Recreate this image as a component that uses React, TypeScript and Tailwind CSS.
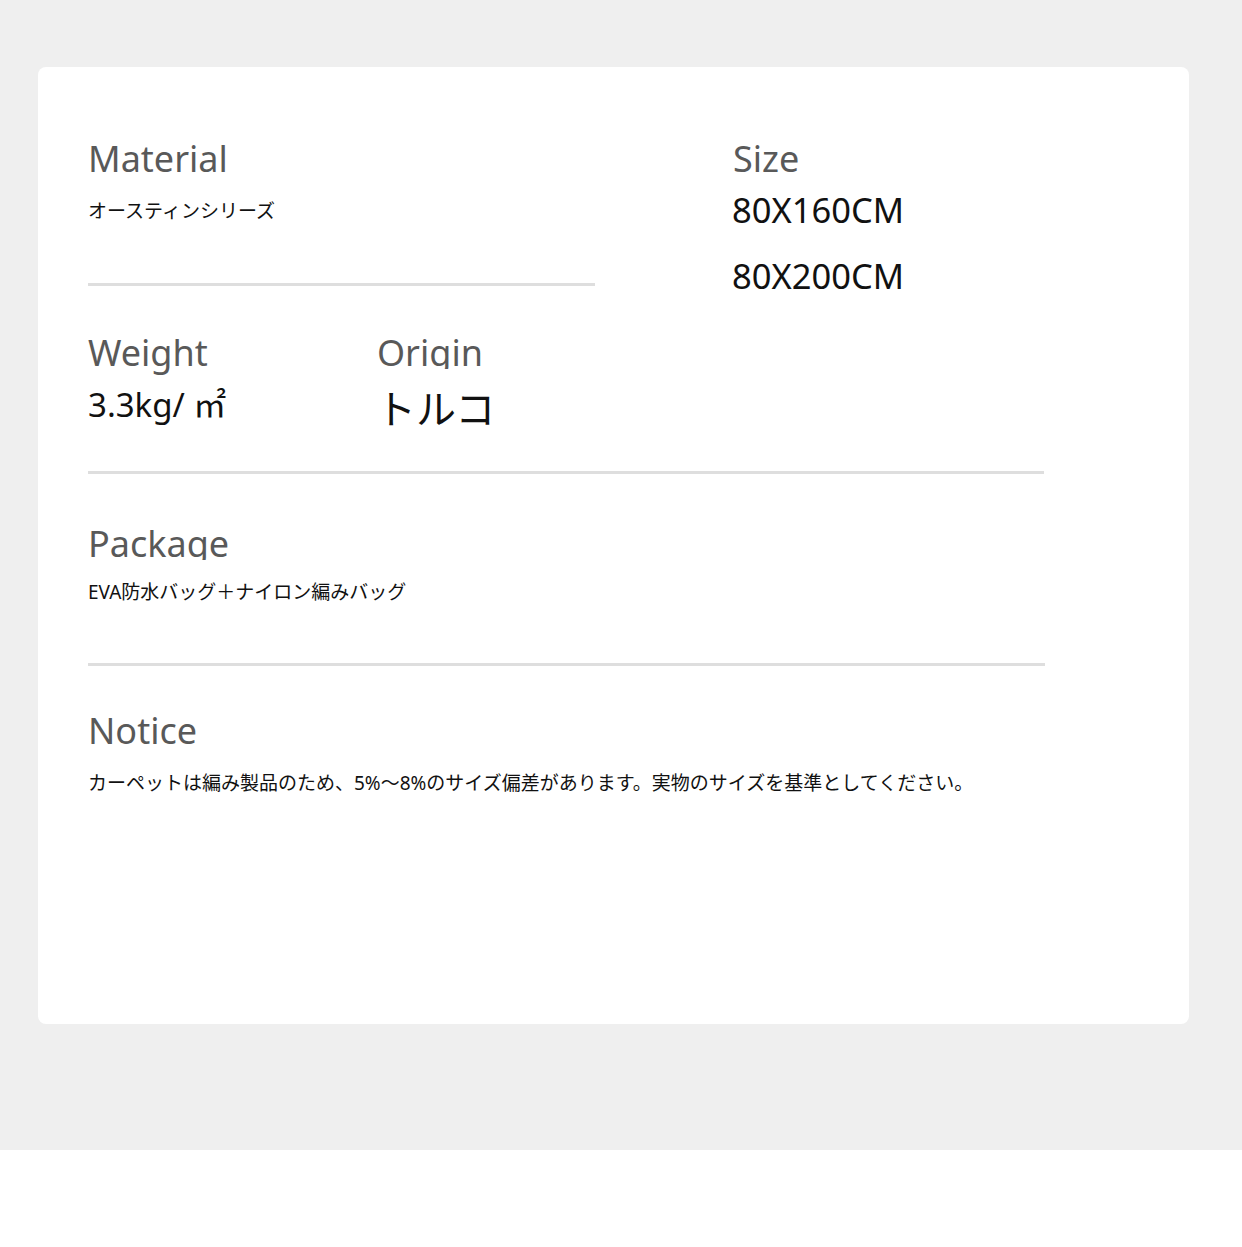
import React from "react";

const font = { fontFamily: '"Noto Sans", "Noto Sans CJK JP", sans-serif' };

const Heading = ({ children, clip }: { children: React.ReactNode; clip?: boolean }) => (
    <div className={`text-[36px] leading-[36px] text-[#595959] ${clip ? "h-[34px] overflow-hidden" : "h-[36px]"}`}>
        {children}
    </div>
);

const Divider = ({ className }: { className: string }) => <div className={`h-[3px] bg-[#dedede] ${className}`} />;

export default function App() {
    return (
        <div style={font} className="w-[1242px] bg-white">
            <div className="bg-[#efefef] pt-[67px] pb-[126px] pl-[38px]">
                <div className="w-[1151px] h-[957px] rounded-[8px] bg-white pl-[50px] pt-[74px]">
                    {/* Material / Size */}
                    <div className="flex items-start h-[147px]">
                        <div className="flex flex-col w-[507px]">
                            <Heading>Material</Heading>
                            <div className="mt-[25px] text-[19px] leading-[19px] text-[#111]">オースティンシリーズ</div>
                            <Divider className="mt-[62px] w-[507px]" />
                        </div>
                        <div className="flex flex-col ml-[137px]">
                            <div className="pl-[1px]">
                                <Heading>Size</Heading>
                            </div>
                            <div className="mt-[16px] text-[34.5px] leading-[34.5px] text-[#111]">80X160CM</div>
                            <div className="mt-[31px] text-[34.5px] leading-[34.5px] text-[#111]">80X200CM</div>
                        </div>
                    </div>

                    {/* Weight / Origin */}
                    <div className="flex items-start mt-[47px]">
                        <div className="flex flex-col w-[289px]">
                            <Heading>Weight</Heading>
                            <div className="mt-[17px] text-[33px] leading-[33px] text-[#111]">3.3kg/ ㎡</div>
                        </div>
                        <div className="flex flex-col">
                            <Heading clip>Origin</Heading>
                            <div className="mt-[20px] -ml-[1px] text-[40px] leading-[40px] text-[#111]">トルコ</div>
                        </div>
                    </div>
                    <Divider className="mt-[42px] w-[956px]" />

                    {/* Package */}
                    <div className="mt-[52px]">
                        <Heading clip>Package</Heading>
                    </div>
                    <div className="mt-[23px] text-[19px] leading-[19px] text-[#111]">EVA防水バッグ＋ナイロン編みバッグ</div>
                    <Divider className="mt-[61px] w-[957px]" />

                    {/* Notice */}
                    <div className="mt-[47px]">
                        <Heading>Notice</Heading>
                    </div>
                    <div className="mt-[25px] text-[19px] leading-[19px] text-[#111]">
                        カーペットは編み製品のため、5%～8%のサイズ偏差があります。実物のサイズを基準としてください。
                    </div>
                </div>
            </div>
            <div className="h-[97px] bg-white" />
        </div>
    );
}
